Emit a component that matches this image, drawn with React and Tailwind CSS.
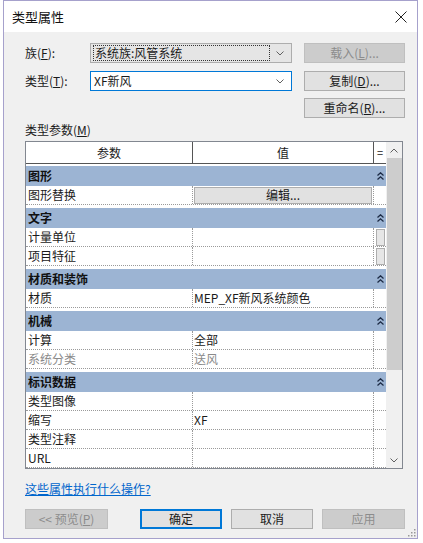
import React from 'react'

const Chevron = ({ dir = 'down', color = '#606060', size = 8 }) => (
    <svg width={size} height={size / 2 + 1} viewBox="0 0 8 5" fill="none">
        {dir === 'down'
            ? <path d="M0.5 0.5 L4 4 L7.5 0.5" stroke={color} strokeWidth="1" />
            : <path d="M0.5 4.5 L4 1 L7.5 4.5" stroke={color} strokeWidth="1" />}
    </svg>
)

const DoubleUp = () => (
    <svg width="7" height="8" viewBox="0 0 7 8" fill="none">
        <path d="M0.5 3.5 L3.5 0.8 L6.5 3.5" stroke="#1c2a44" strokeWidth="1.3" />
        <path d="M0.5 7.5 L3.5 4.8 L6.5 7.5" stroke="#1c2a44" strokeWidth="1.3" />
    </svg>
)

const groups = [
    { name: '图形', rows: [{ k: '图形替换', edit: true }] },
    { name: '文字', rows: [{ k: '计量单位', btn: true }, { k: '项目特征', btn: true }] },
    { name: '材质和装饰', rows: [{ k: '材质', v: 'MEP_XF新风系统颜色' }] },
    { name: '机械', rows: [{ k: '计算', v: '全部' }, { k: '系统分类', v: '送风', gray: true }] },
    { name: '标识数据', rows: [{ k: '类型图像' }, { k: '缩写', v: 'XF' }, { k: '类型注释' }, { k: 'URL' }] },
]

const Btn = ({ children, disabled, primary, className = '' }) => (
    <div className={`flex h-[20px] items-center justify-center border text-[12px] ${disabled ? 'border-[#bfbfbf] bg-[#cccccc] text-[#8c8c8c]' : primary ? 'border-[#0078d7] bg-[#e1e1e1] text-[#1a1a1a] shadow-[inset_0_0_0_1px_#0078d7]' : 'border-[#adadad] bg-[#e1e1e1] text-[#1a1a1a]'} ${className}`}>
        {children}
    </div>
)

export default function App() {
    return (
        <div className="h-[543px] w-[423px] overflow-hidden bg-white font-['Noto_Sans_CJK_SC','Microsoft_YaHei',sans-serif] leading-none">
            <div className="ml-[3px] flex h-[539px] w-[415px] flex-col border border-[#a6a1cc] bg-[#f0f0f0]">
                <div className="flex h-[31px] shrink-0 items-center justify-between bg-white pl-[8px] pr-[8px]">
                    <span className="text-[13px] text-[#111]">类型属性</span>
                    <svg width="12" height="12" viewBox="0 0 12 12" className="mr-[2px]">
                        <path d="M0.5 0.5 L11.5 11.5 M11.5 0.5 L0.5 11.5" stroke="#222" strokeWidth="1" />
                    </svg>
                </div>

                <div className="flex flex-1 flex-col pl-[21px]">
                    <div className="mt-[11px] flex items-center">
                        <span className="w-[65px] text-[12px] text-[#1a1a1a]">族(<span className="underline">F</span>):</span>
                        <div className="flex h-[20px] w-[202px] items-center border border-[#adadad] bg-[#e5e5e5] pl-[2px] pr-[7px]">
                            <span className="flex h-[16px] flex-1 items-center border border-dotted border-[#333] pl-[1px] text-[12px] text-[#1a1a1a]">系统族:风管系统</span>
                            <span className="ml-[6px]"><Chevron /></span>
                        </div>
                        <Btn disabled className="ml-[12px] w-[101px]">载入(<span className="underline">L</span>)...</Btn>
                    </div>

                    <div className="mt-[8px] flex items-center">
                        <span className="w-[65px] text-[12px] text-[#1a1a1a]">类型(<span className="underline">T</span>):</span>
                        <div className="flex h-[20px] w-[202px] items-center border border-[#0078d7] bg-white pl-[3px] pr-[7px]">
                            <span className="flex-1 text-[12px] text-[#1a1a1a]">XF新风</span>
                            <Chevron />
                        </div>
                        <Btn className="ml-[12px] w-[101px]">复制(<span className="underline">D</span>)...</Btn>
                    </div>

                    <div className="mt-[7px] flex justify-end pr-[12px]">
                        <Btn className="w-[101px]">重命名(<span className="underline">R</span>)...</Btn>
                    </div>

                    <div className="mt-[6px] text-[12px] text-[#1a1a1a]">类型参数(<span className="underline">M</span>)</div>

                    <div className="mt-[5px] flex h-[328px] w-[378px] overflow-hidden border border-[#828790] bg-white">
                        <div className="flex w-[360px] flex-col overflow-hidden">
                            <div className="flex h-[22px] shrink-0 border-b border-[#555] text-[12px] text-[#1a1a1a]">
                                <div className="flex w-[167px] items-center justify-center border-r border-[#555]">参数</div>
                                <div className="flex w-[181px] items-center justify-center border-r border-[#555]">值</div>
                                <div className="flex w-[12px] items-center justify-center text-[11px]">=</div>
                            </div>
                            {groups.map((g, gi) => (
                                <div key={g.name} className={`flex shrink-0 flex-col ${gi === 0 ? 'mt-[2px]' : 'mt-[3px]'}`}>
                                    <div className="flex h-[20px] items-center bg-[#9cb4d3]">
                                        <span className="flex-1 pl-[2px] text-[12px] font-bold text-[#111]">{g.name}</span>
                                        <span className="flex w-[12px] justify-center"><DoubleUp /></span>
                                    </div>
                                    {g.rows.map((r) => (
                                        <div key={r.k} className={`flex h-[19px] border-b border-dotted border-[#9a9a9a] text-[12px] ${r.gray ? 'text-[#8a8a8a]' : 'text-[#1a1a1a]'}`}>
                                            <div className="flex w-[167px] items-center border-r border-dotted border-[#9a9a9a] pl-[2px]">{r.k}</div>
                                            <div className="flex w-[181px] items-center border-r border-dotted border-[#9a9a9a] pl-[1px]">
                                                {r.edit ? (
                                                    <div className="flex h-[17px] w-[178px] items-center justify-center border border-[#adadad] bg-[#e1e1e1]">编辑...</div>
                                                ) : r.v}
                                            </div>
                                            <div className="flex w-[12px] items-center justify-center">
                                                {r.btn && <div className="h-[17px] w-[9px] border border-[#adadad] bg-[#e6e6e6]" />}
                                            </div>
                                        </div>
                                    ))}
                                </div>
                            ))}
                        </div>
                        <div className="flex w-[16px] flex-col items-center bg-[#f0f0f0]">
                            <div className="flex h-[16px] items-center justify-center"><Chevron dir="up" /></div>
                            <div className="h-[212px] w-[15px] bg-[#cdcdcd]" />
                            <div className="flex-1" />
                            <div className="flex h-[16px] items-center justify-center"><Chevron /></div>
                        </div>
                    </div>

                    <div className="mt-[14px] text-[12px] text-[#0066cc] underline">这些属性执行什么操作?</div>

                    <div className="mt-[14px] flex items-center">
                        <Btn disabled className="w-[83px]">&lt;&lt; 预览(<span className="underline">P</span>)</Btn>
                        <Btn primary className="ml-[32px] w-[82px]">确定</Btn>
                        <Btn className="ml-[9px] w-[82px]">取消</Btn>
                        <Btn disabled className="ml-[9px] w-[83px]">应用</Btn>
                    </div>
                </div>
                <div className="flex justify-end pb-[1px] pr-[1px]">
                    <svg width="8" height="8" viewBox="0 0 8 8">
                        <rect x="6" y="0" width="1.5" height="1.5" fill="#999" />
                        <rect x="3" y="3" width="1.5" height="1.5" fill="#999" />
                        <rect x="6" y="3" width="1.5" height="1.5" fill="#999" />
                        <rect x="0" y="6" width="1.5" height="1.5" fill="#999" />
                        <rect x="3" y="6" width="1.5" height="1.5" fill="#999" />
                        <rect x="6" y="6" width="1.5" height="1.5" fill="#999" />
                    </svg>
                </div>
            </div>
        </div>
    )
}
